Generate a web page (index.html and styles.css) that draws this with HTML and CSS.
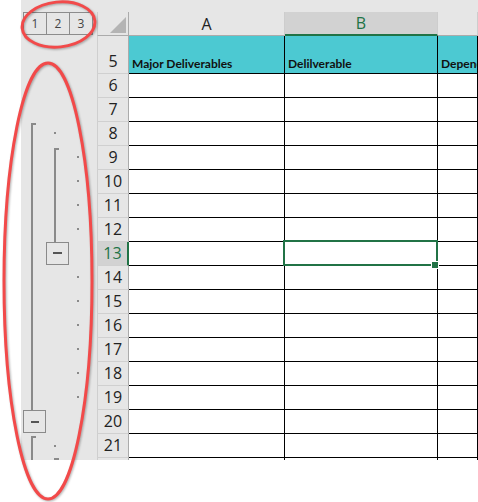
FILE: index.html
```html
<!DOCTYPE html>
<html>
<head>
<meta charset="utf-8">
<link rel="stylesheet" href="styles.css">
</head>
<body>
<div class="sheet">
  <div class="top"></div>
  <div class="grp"><span>1</span><span>2</span><span>3</span></div>
  <div class="corner"><svg width="16" height="16" viewBox="0 0 16 16"><polygon points="16,0 16,16 0,16" fill="#b4b4b4"/></svg></div>
  <div class="ch">A</div>
  <div class="ch sel">B</div>
  <div class="ch"></div>

  <svg class="outline" width="76" height="424" viewBox="0 0 76 424">
    <g fill="#8a8a8a">
      <rect x="10" y="87" width="2" height="287"/>
      <rect x="10" y="87" width="5" height="2"/>
      <rect x="33" y="96" width="2" height="2"/>
      <rect x="33" y="112" width="2" height="94"/>
      <rect x="33" y="112" width="5" height="2"/>
      <rect x="56" y="120" width="2" height="2"/>
      <rect x="56" y="144" width="2" height="2"/>
      <rect x="56" y="168" width="2" height="2"/>
      <rect x="56" y="192" width="2" height="2"/>
      <rect x="56" y="240" width="2" height="2"/>
      <rect x="56" y="264" width="2" height="2"/>
      <rect x="56" y="288" width="2" height="2"/>
      <rect x="56" y="312" width="2" height="2"/>
      <rect x="56" y="336" width="2" height="2"/>
      <rect x="56" y="360" width="2" height="2"/>
      <rect x="10" y="400" width="2" height="24"/>
      <rect x="10" y="400" width="5" height="2"/>
      <rect x="33" y="409" width="2" height="2"/>
      <rect x="33" y="422" width="2" height="2"/>
      <rect x="33" y="422" width="5" height="2"/>
    </g>
    <rect x="25.5" y="206.5" width="22" height="22" fill="#e6e6e6" stroke="#8a8a8a"/>
    <rect x="32" y="216" width="9" height="2" fill="#555"/>
    <rect x="2.5" y="374.5" width="22" height="22" fill="#e6e6e6" stroke="#8a8a8a"/>
    <rect x="10" y="385" width="8" height="2" fill="#555"/>
  </svg>

  <div class="rh">5</div><div class="c hd">Major Deliverables</div><div class="c hd">Delilverable</div><div class="c hd">Dependencies</div>
  <div class="rh">6</div><div class="c"></div><div class="c"></div><div class="c"></div>
  <div class="rh">7</div><div class="c"></div><div class="c"></div><div class="c"></div>
  <div class="rh">8</div><div class="c"></div><div class="c"></div><div class="c"></div>
  <div class="rh">9</div><div class="c"></div><div class="c"></div><div class="c"></div>
  <div class="rh">10</div><div class="c"></div><div class="c"></div><div class="c"></div>
  <div class="rh">11</div><div class="c"></div><div class="c"></div><div class="c"></div>
  <div class="rh">12</div><div class="c"></div><div class="c"></div><div class="c"></div>
  <div class="rh sel">13</div><div class="c"></div><div class="c cur"></div><div class="c"></div>
  <div class="rh">14</div><div class="c"></div><div class="c"></div><div class="c"></div>
  <div class="rh">15</div><div class="c"></div><div class="c"></div><div class="c"></div>
  <div class="rh">16</div><div class="c"></div><div class="c"></div><div class="c"></div>
  <div class="rh">17</div><div class="c"></div><div class="c"></div><div class="c"></div>
  <div class="rh">18</div><div class="c"></div><div class="c"></div><div class="c"></div>
  <div class="rh">19</div><div class="c"></div><div class="c"></div><div class="c"></div>
  <div class="rh">20</div><div class="c"></div><div class="c"></div><div class="c"></div>
  <div class="rh">21</div><div class="c"></div><div class="c"></div><div class="c"></div>
  <div class="rh"></div><div class="c"></div><div class="c"></div><div class="c"></div>
</div>
<svg class="marks" width="478" height="502" viewBox="0 0 478 502">
  <ellipse cx="58.5" cy="24.5" rx="36.5" ry="22.5" transform="rotate(-6 58.5 24.5)"/>
  <ellipse cx="48" cy="281" rx="44" ry="218"/>
</svg>
</body>
</html>
```
FILE: styles.css
```css
html, body {
  margin: 0;
  padding: 0;
  background: #fff;
}
body {
  width: 478px;
  height: 502px;
  overflow: hidden;
  position: relative;
  font-family: "Open Sans", "Noto Sans", sans-serif;
}
.sheet {
  margin-left: 21px;
  width: 457px;
  height: 460px;
  overflow: hidden;
  background: #e6e6e6;
  display: grid;
  grid-template-columns: 76px 32px 156px 153px 1fr;
  grid-template-rows: 12px 24px 38px repeat(17, 24px);
}
.top {
  grid-column: 1 / -1;
}
.grp {
  grid-column: 1;
  display: flex;
  align-self: start;
  margin-left: 2px;
  height: 23px;
  border-left: 1px solid #8c8c8c;
  box-sizing: border-box;
}
.grp span {
  width: 23px;
  box-sizing: border-box;
  border: 1px solid #8c8c8c;
  border-left: 0;
  display: flex;
  align-items: center;
  justify-content: center;
  font-size: 12px;
  color: #444;
}
.corner {
  grid-column: 2;
  box-sizing: border-box;
  border-left: 1px solid #cfcfcf;
  border-right: 1px solid #ababab;
  border-bottom: 1px solid #ababab;
  display: flex;
  justify-content: flex-end;
  align-items: flex-end;
  padding: 0 2px 2px 0;
}
.corner svg {
  display: block;
}
.ch {
  box-sizing: border-box;
  border-right: 1px solid #cdcdcd;
  border-bottom: 1px solid #ababab;
  display: flex;
  align-items: center;
  justify-content: center;
  font-size: 16px;
  line-height: 20px;
  color: #222;
}
.ch.sel {
  background: #d2d2d2;
  color: #217346;
  border-bottom: 2px solid #217346;
}
.outline {
  grid-column: 1;
  grid-row: 3 / -1;
  display: block;
}
.rh {
  grid-column: 2;
  box-sizing: border-box;
  border-left: 1px solid #cfcfcf;
  border-right: 1px solid #ababab;
  border-bottom: 1px solid #d0d0d0;
  display: flex;
  align-items: flex-end;
  justify-content: center;
  padding-bottom: 2px;
  font-size: 16px;
  line-height: 20px;
  color: #222;
}
.rh.sel {
  background: #d2d2d2;
  color: #217346;
  border-right: 2px solid #217346;
}
.c {
  box-sizing: border-box;
  background: #fff;
  border-right: 1px solid #000;
  border-bottom: 1px solid #000;
  min-width: 0;
}
.c.hd {
  background: #4cc9d2;
  font-family: Lato, "Liberation Sans", sans-serif;
  font-weight: 700;
  font-size: 12px;
  line-height: 14px;
  color: #111;
  display: flex;
  align-items: flex-end;
  padding: 0 0 2px 3px;
  white-space: nowrap;
  overflow: hidden;
}
.c.cur {
  position: relative;
}
.c.cur::after {
  content: "";
  position: absolute;
  left: -2px;
  top: -2px;
  right: -1px;
  bottom: -1px;
  border: 2px solid #217346;
}
.c.cur::before {
  content: "";
  position: absolute;
  width: 6px;
  height: 6px;
  right: -1px;
  bottom: -3px;
  background: #217346;
  box-shadow: 0 0 0 1px #fff;
  z-index: 1;
}
.marks {
  position: absolute;
  left: 0;
  top: 0;
  pointer-events: none;
  fill: none;
  stroke: #f24a4a;
  stroke-width: 3;
  filter: drop-shadow(1px 1px 1px rgba(0, 0, 0, 0.3));
}
```
